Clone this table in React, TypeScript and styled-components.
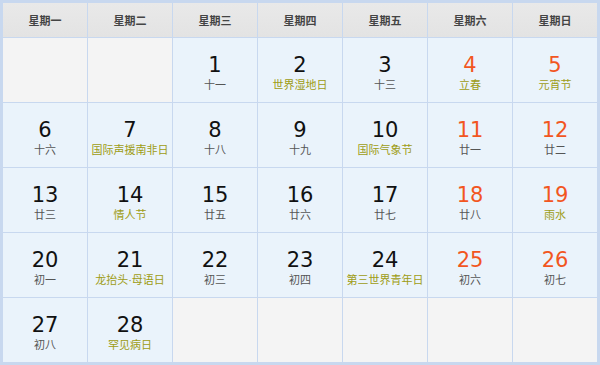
import React from "react";
import styled, { createGlobalStyle } from "styled-components";

type Day = { n: number; sub: string; fest?: boolean; weekend?: boolean };

const weekdays = ["星期一", "星期二", "星期三", "星期四", "星期五", "星期六", "星期日"];

const days: Day[] = [
  { n: 1, sub: "十一" },
  { n: 2, sub: "世界湿地日", fest: true },
  { n: 3, sub: "十三" },
  { n: 4, sub: "立春", fest: true, weekend: true },
  { n: 5, sub: "元宵节", fest: true, weekend: true },
  { n: 6, sub: "十六" },
  { n: 7, sub: "国际声援南非日", fest: true },
  { n: 8, sub: "十八" },
  { n: 9, sub: "十九" },
  { n: 10, sub: "国际气象节", fest: true },
  { n: 11, sub: "廿一", weekend: true },
  { n: 12, sub: "廿二", weekend: true },
  { n: 13, sub: "廿三" },
  { n: 14, sub: "情人节", fest: true },
  { n: 15, sub: "廿五" },
  { n: 16, sub: "廿六" },
  { n: 17, sub: "廿七" },
  { n: 18, sub: "廿八", weekend: true },
  { n: 19, sub: "雨水", fest: true, weekend: true },
  { n: 20, sub: "初一" },
  { n: 21, sub: "龙抬头·母语日", fest: true },
  { n: 22, sub: "初三" },
  { n: 23, sub: "初四" },
  { n: 24, sub: "第三世界青年日", fest: true },
  { n: 25, sub: "初六", weekend: true },
  { n: 26, sub: "初七", weekend: true },
  { n: 27, sub: "初八" },
  { n: 28, sub: "罕见病日", fest: true },
];

// february starts on a wednesday
const leading = 2;
const trailing = 35 - leading - days.length;

function App() {
  return (
    <>
      <GlobalStyle />
      <Calendar>
        {weekdays.map((w) => (
          <HeadCell key={w}>{w}</HeadCell>
        ))}
        {Array.from({ length: leading }).map((_, i) => (
          <EmptyCell key={`a${i}`} />
        ))}
        {days.map((d) => (
          <DayCell key={d.n}>
            <DayNum $weekend={d.weekend}>{d.n}</DayNum>
            <Lunar $fest={d.fest}>{d.sub}</Lunar>
          </DayCell>
        ))}
        {Array.from({ length: trailing }).map((_, i) => (
          <EmptyCell key={`b${i}`} />
        ))}
      </Calendar>
    </>
  );
}

//@ styled ////////////////////////////////////////
const GlobalStyle = createGlobalStyle`
  body {
    margin: 0;
    background: #fff;
    font-family: "Noto Sans CJK SC", sans-serif;
  }
`;

const Calendar = styled.div`
  width: 600px;
  height: 365px;
  box-sizing: border-box;
  border: 3px solid #c8d8ef;
  display: grid;
  grid-template-columns: repeat(7, 1fr);
  grid-template-rows: 34px repeat(5, 64px);
  gap: 1px;
  background: #c8d8ef;
`;

const HeadCell = styled.div`
  background: linear-gradient(#e9e9e9, #e3e3e3);
  display: flex;
  align-items: center;
  justify-content: center;
  font-size: 11px;
  font-weight: bold;
  color: #444;
`;

const EmptyCell = styled.div`
  background: #f4f4f4;
`;

const DayCell = styled.div`
  background: #eaf3fb;
  display: flex;
  flex-direction: column;
  align-items: center;
  padding-top: 15px;
`;

const DayNum = styled.div<{ $weekend?: boolean }>`
  font-family: "DejaVu Sans", sans-serif;
  font-size: 21px;
  line-height: 24px;
  color: ${({ $weekend }) => ($weekend ? "#f2561f" : "#111")};
`;

const Lunar = styled.div<{ $fest?: boolean }>`
  margin-top: 1px;
  font-family: "Liberation Sans", "Noto Sans CJK SC", sans-serif;
  font-size: 11px;
  line-height: 14px;
  color: ${({ $fest }) => ($fest ? "#9e9c14" : "#555")};
`;

export default App;
